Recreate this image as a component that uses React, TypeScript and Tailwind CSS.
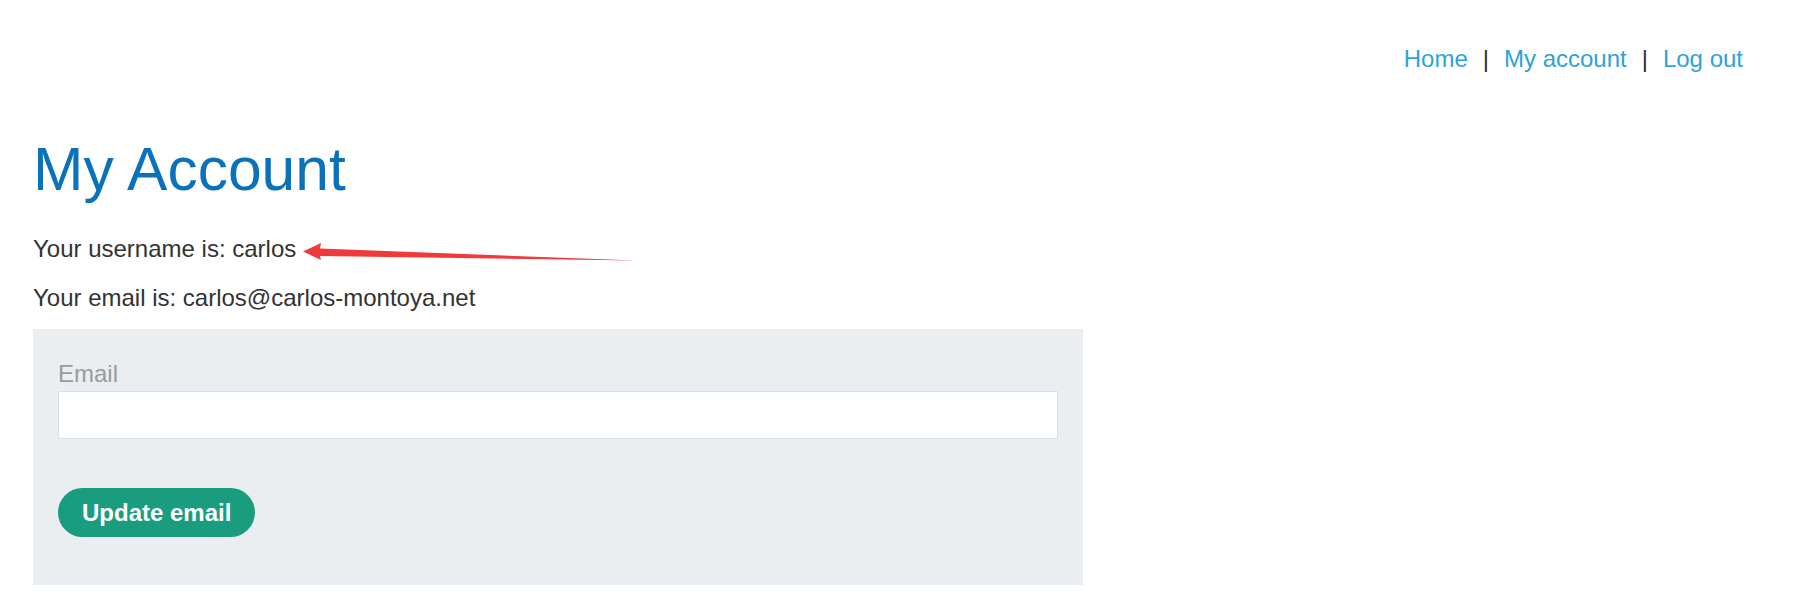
import React from 'react'

const font = { fontFamily: '"Liberation Sans", Arial, sans-serif' }

function NavBar() {
  return (
    <div className="flex justify-end pt-[45px] pr-[58px] text-[24px] leading-[27px]">
      <a className="text-[#2ea3d8]">Home</a>
      <span className="mx-[15px] text-[#333]">|</span>
      <a className="text-[#2ea3d8]">My account</a>
      <span className="mx-[15px] text-[#333]">|</span>
      <a className="text-[#2ea3d8]">Log out</a>
    </div>
  )
}

// red annotation arrow pointing at the username
function Arrow() {
  return (
    <svg className="absolute left-[300px] top-[238px]" width="340" height="28" viewBox="0 0 340 28">
      <path d="M3 13.5 L21 5 L20 10.5 L336 22.5 L20 18 L21 22 Z" fill="#ef3a3a" />
    </svg>
  )
}

export default function App() {
  return (
    <div className="relative min-h-[610px] bg-white text-[#333332]" style={font}>
      <NavBar />
      <div className="pl-[33px]">
        <h1 className="mt-[65px] text-[60.5px] leading-[64px] font-normal text-[#0a71bb]">My Account</h1>
        <p className="mt-[34px] text-[24px] leading-[27px]">Your username is: carlos</p>
        <p className="mt-[22px] text-[24px] leading-[27px]">Your email is: carlos@carlos-montoya.net</p>
        <form className="mt-[18px] w-[1050px] bg-[#eaeef1] px-[25px] pt-[31px] pb-[48px]">
          <label className="block text-[24px] leading-[27px] text-[#999b9d]">Email</label>
          <input
            type="email"
            className="mt-[4px] block h-[48px] w-full border border-[#dde0e3] bg-white outline-none"
          />
          <button
            type="button"
            className="mt-[49px] h-[49px] rounded-full bg-[#1a9d7f] px-[24px] text-[24px] font-bold text-white"
          >
            Update email
          </button>
        </form>
      </div>
      <Arrow />
    </div>
  )
}
